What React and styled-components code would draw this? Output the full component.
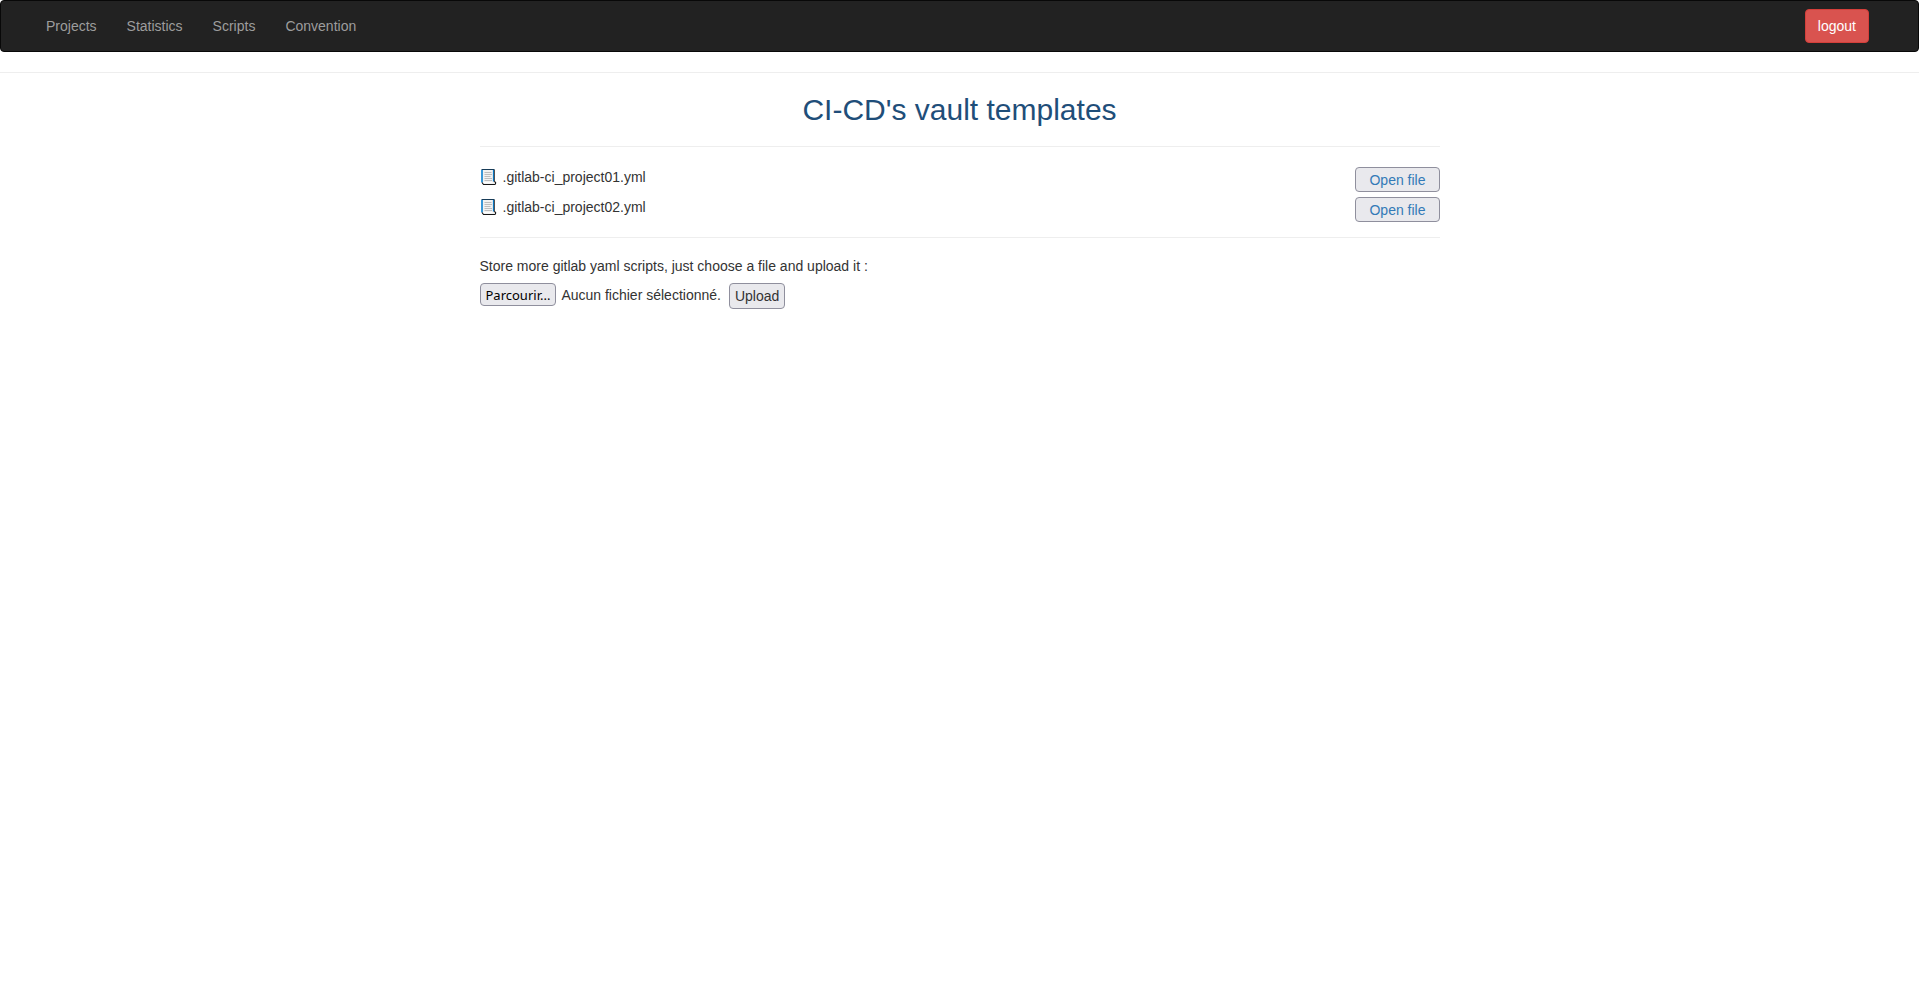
import React, { useRef, useState } from "react";
import styled, { createGlobalStyle } from "styled-components";

const GlobalStyle = createGlobalStyle`
  *, *::before, *::after { box-sizing: border-box; }
  body {
    margin: 0;
    background: #fff;
    color: #333;
    font-family: "Liberation Sans", Arial, sans-serif;
    font-size: 14px;
    line-height: 20px;
  }
`;

const Navbar = styled.nav`
  display: flex;
  align-items: center;
  justify-content: space-between;
  min-height: 52px;
  padding: 0 49px 0 30px;
  background: #222;
  border: 1px solid #080808;
  border-radius: 4px;
`;

const NavList = styled.ul`
  display: flex;
  margin: 0;
  padding: 0;
  list-style: none;
`;

const NavLink = styled.a`
  display: block;
  padding: 15px;
  color: #9d9d9d;
  text-decoration: none;
  &:hover { color: #fff; }
`;

const LogoutButton = styled.button`
  height: 34px;
  padding: 0 12px;
  color: #fff;
  font: inherit;
  background: #d9534f;
  border: 1px solid #d43f3a;
  border-radius: 4px;
  cursor: pointer;
`;

const Divider = styled.hr`
  margin: 20px 0 ${(p) => (p.$tight ? "18px" : "20px")};
  border: 0;
  border-top: 1px solid #eee;
`;

const Content = styled.main`
  width: min(960px, 100%);
  margin: 0 auto;
`;

const Title = styled.h2`
  margin: 0;
  color: #1f4e79;
  font-size: 30px;
  font-weight: 500;
  line-height: 33px;
  text-align: center;
`;

const FileList = styled.ul`
  display: flex;
  flex-direction: column;
  gap: 5px;
  margin: 0 0 -5px;
  padding: 0;
  list-style: none;
`;

const FileRow = styled.li`
  display: flex;
  align-items: flex-start;
  justify-content: space-between;
`;

const FileName = styled.span`
  display: flex;
  align-items: center;
  gap: 6px;
`;

const Button = styled.button`
  height: 26px;
  padding: 0 5px;
  color: #333;
  font: inherit;
  background: #e9e9ed;
  border: 1px solid #8f8f9d;
  border-radius: 4px;
  cursor: pointer;
`;

const OpenButton = styled(Button)`
  height: 25px;
  padding: 0 13px;
  color: #337ab7;
`;

const BrowseButton = styled(Button)`
  height: 23px;
  color: #000;
  font-family: "Noto Sans", "Open Sans", sans-serif;
  font-size: 13px;
`;

const Hint = styled.p`
  margin: 0 0 7px;
`;

const UploadForm = styled.form`
  display: flex;
  align-items: flex-start;
  gap: 8px;
`;

const FilePicker = styled.div`
  display: flex;
  align-items: center;
  gap: 5px;
`;

const ScrollSvg = styled.svg`
  display: block;
  width: 17px;
  height: 20px;
`;

function ScrollIcon() {
  return (
    <ScrollSvg viewBox="0 0 17 20" aria-hidden="true">
      <path d="M2 2.5H14V14.5H15.5V17.5H4L2 16Z" fill="#f2f2f2" />
      <path
        d="M4.5 5.5H11.5M4.5 7.5H12M4.5 9.5H10.5M4.5 11.5H12M4.5 13.5H12"
        stroke="#bdbdbd"
      />
      <path d="M3.5 15.6H12.5" stroke="#fff" />
      <path d="M2 3V15.5" stroke="#0a7fd0" strokeWidth="1.6" />
      <path d="M13.5 3V14.5" stroke="#0a7fd0" strokeWidth="1.2" />
      <path d="M14.4 3V15" stroke="#111" strokeWidth="0.8" />
      <path d="M1.5 2.5H14.6" stroke="#173b57" />
      <path
        d="M2 15.5L3.5 17.5H14.5Q15.8 17.4 15.6 15.4L14.4 14.6"
        fill="none"
        stroke="#151515"
        strokeWidth="1.1"
      />
    </ScrollSvg>
  );
}

const links = ["Projects", "Statistics", "Scripts", "Convention"];
const files = [".gitlab-ci_project01.yml", ".gitlab-ci_project02.yml"];

export default function App() {
  const fileInput = useRef(null);
  const [selected, setSelected] = useState("");

  return (
    <>
      <GlobalStyle />
      <Navbar>
        <NavList>
          {links.map((name) => (
            <li key={name}>
              <NavLink href={`#${name.toLowerCase()}`}>{name}</NavLink>
            </li>
          ))}
        </NavList>
        <LogoutButton type="button">logout</LogoutButton>
      </Navbar>
      <Divider />
      <Content>
        <Title>CI-CD's vault templates</Title>
        <Divider />
        <FileList>
          {files.map((name) => (
            <FileRow key={name}>
              <FileName>
                <ScrollIcon />
                {name}
              </FileName>
              <OpenButton type="button">Open file</OpenButton>
            </FileRow>
          ))}
        </FileList>
        <Divider $tight />
        <Hint id="upload-hint">
          Store more gitlab yaml scripts, just choose a file and upload it :
        </Hint>
        <UploadForm onSubmit={(e) => e.preventDefault()}>
          <FilePicker>
            <input
              ref={fileInput}
              type="file"
              hidden
              aria-labelledby="upload-hint"
              onChange={(e) => setSelected(e.target.files[0]?.name ?? "")}
            />
            <BrowseButton
              type="button"
              aria-describedby="upload-hint"
              onClick={() => fileInput.current.click()}
            >
              Parcourir...
            </BrowseButton>
            <span>{selected || "Aucun fichier sélectionné."}</span>
          </FilePicker>
          <Button type="submit">Upload</Button>
        </UploadForm>
      </Content>
    </>
  );
}
